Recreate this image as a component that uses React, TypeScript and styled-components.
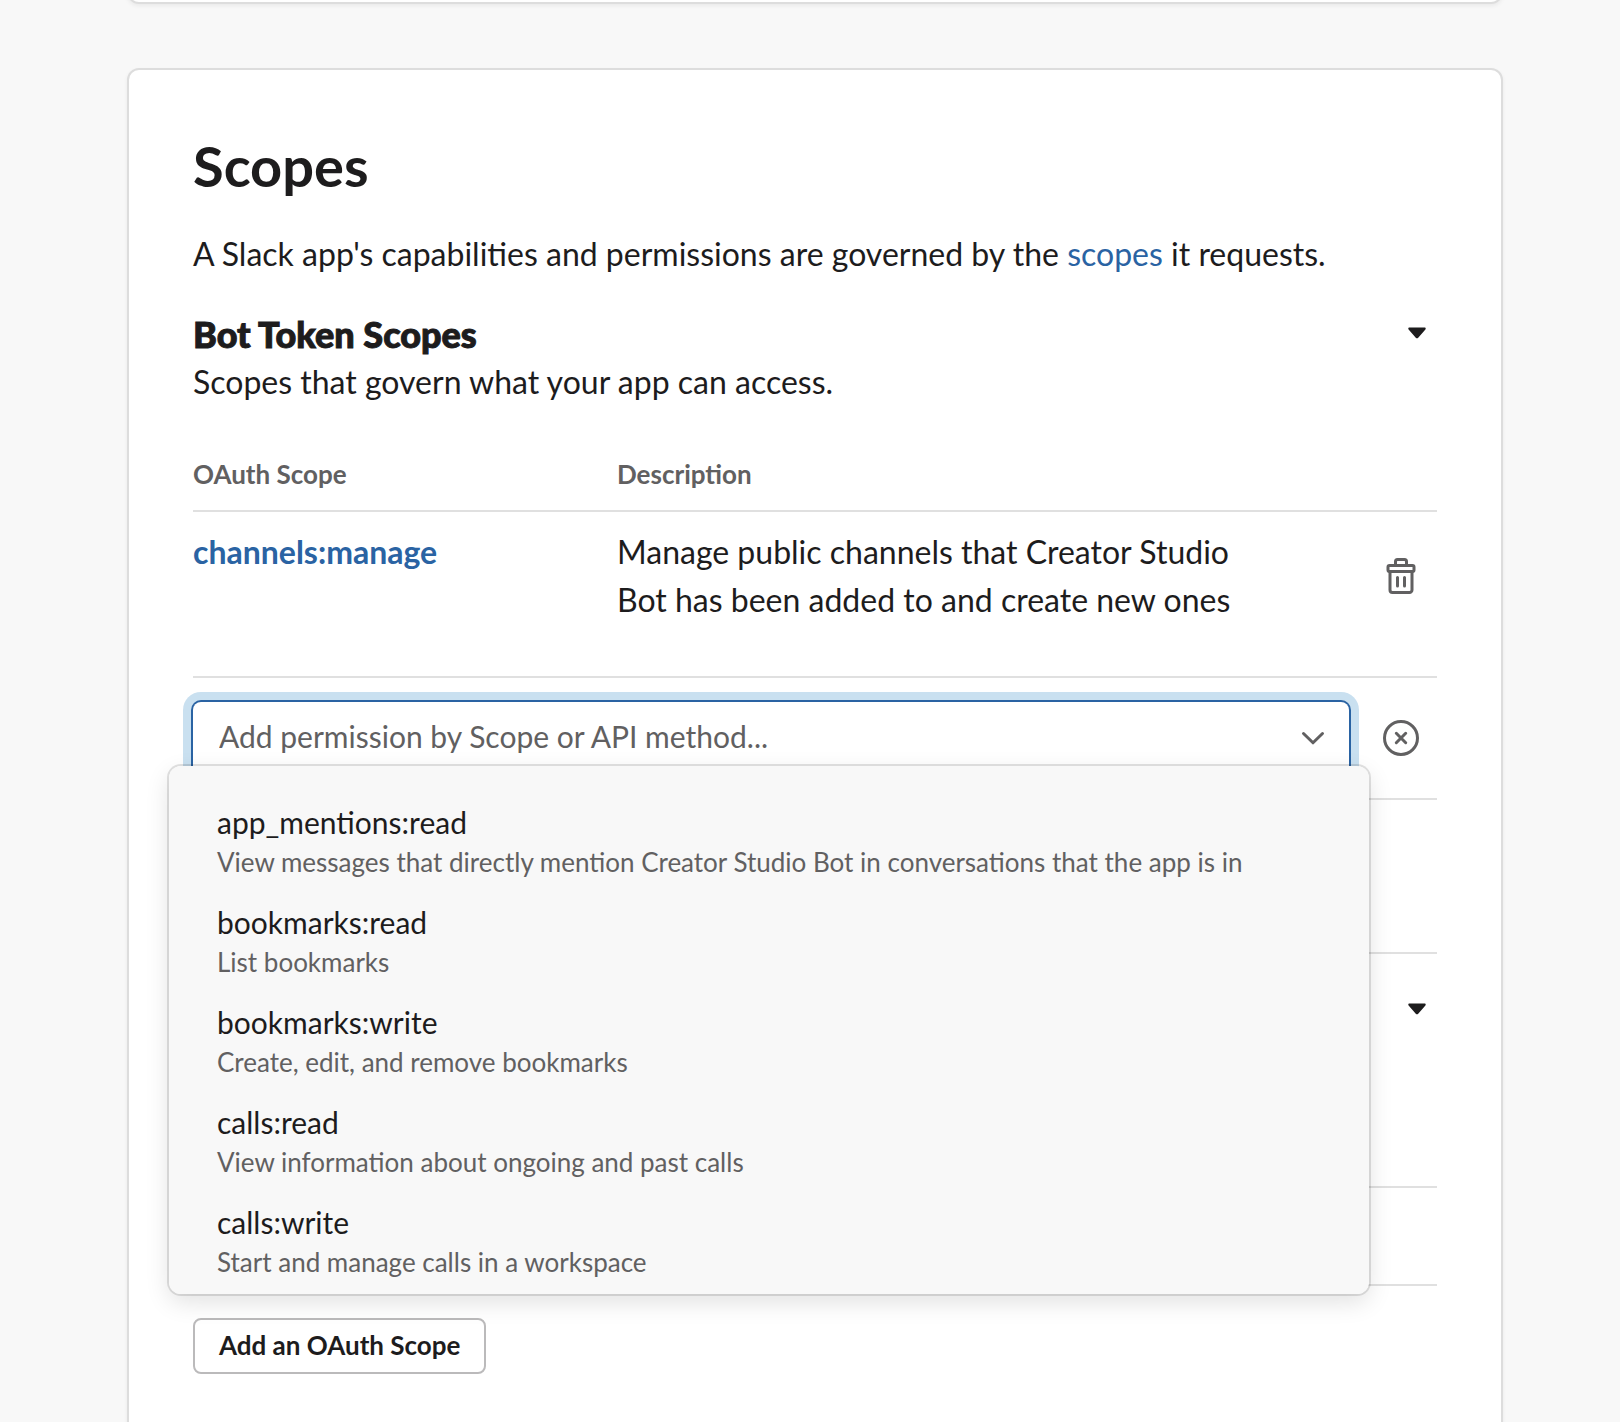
import React from "react";
import styled, { createGlobalStyle } from "styled-components";

const ink = "#1d1c1d";
const muted = "#616061";
const line = "#e0e0e0";
const blue = "#2a63a3";

const GlobalStyle = createGlobalStyle`
  *, *::before, *::after { box-sizing: border-box; }
  body {
    margin: 0;
    background: #f8f8f8;
    color: ${ink};
    font-family: Lato, "Liberation Sans", sans-serif;
    font-size: 32px;
    line-height: 48px;
  }
`;

const Page = styled.main`
  display: flex;
  flex-direction: column;
  gap: 64px;
  height: 100vh;
  padding: 0 117px 0 127px;
  overflow: hidden;
`;

const Card = styled.section`
  flex: none;
  padding: 64px;
  background: #fff;
  border: 2px solid #dddddd;
  border-radius: 12px;
  box-shadow: 0 2px 4px rgba(0, 0, 0, 0.06);
`;

const PreviousCard = styled(Card)`
  margin-top: -128px;
`;

const Title = styled.h1`
  margin: 0 0 32px;
  font-size: 56px;
  font-weight: 700;
  line-height: 64px;
`;

const Text = styled.p`
  margin: 0;
`;

const Link = styled.a<{ $bold?: boolean }>`
  color: ${blue};
  font-weight: ${(p) => (p.$bold ? 700 : 400)};
  text-decoration: none;
`;

const ScopeGroup = styled.section<{ $divided?: boolean }>`
  margin-top: 32px;
  padding-bottom: ${(p) => (p.$divided ? 152 : 0)}px;
  border-bottom: ${(p) => (p.$divided ? `2px solid ${line}` : "none")};
`;

const GroupHeader = styled.header`
  display: flex;
  justify-content: space-between;
  min-height: 96px;
`;

const GroupTitle = styled.h2`
  margin: 0;
  font-size: 36px;
  font-weight: 900;
  line-height: 48px;
  -webkit-text-stroke: 1px ${ink};
`;

const IconButton = styled.button<{ $width?: number; $height?: number }>`
  display: flex;
  flex: none;
  align-items: center;
  justify-content: center;
  width: ${(p) => p.$width ?? 72}px;
  height: ${(p) => p.$height ?? 72}px;
  padding: 0;
  border: 0;
  background: none;
  color: ${muted};
  cursor: pointer;
`;

const CaretButton = styled(IconButton)`
  color: ${ink};
`;

const Table = styled.table`
  width: 100%;
  margin-top: 32px;
  border-collapse: separate;
  border-spacing: 0;
  table-layout: fixed;
`;

const ScopeCol = styled.col`
  width: 424px;
`;

const ActionCol = styled.col`
  width: 72px;
`;

const HeadCell = styled.th`
  height: 74px;
  padding: 16px 0;
  border-bottom: 2px solid ${line};
  color: ${muted};
  font-size: 26px;
  font-weight: 700;
  line-height: 40px;
  text-align: left;
`;

const Cell = styled.td<{ $pad?: number }>`
  padding: ${(p) => p.$pad ?? 16}px 0;
  border-bottom: 2px solid ${line};
  vertical-align: top;
`;

const EmptyCell = styled(Cell)`
  height: 98px;
`;

const Description = styled.p`
  max-width: 640px;
  margin: 0 0 36px;
`;

const Combobox = styled.div`
  position: relative;
  margin-right: 16px;
`;

const Field = styled.label`
  display: flex;
  align-items: center;
  height: 72px;
  padding: 0 24px 0 26px;
  border-radius: 8px;
  background: #fff;
  box-shadow: 0 0 0 2px ${blue}, 0 0 0 10px #c9e0f0;
  color: ${muted};
`;

const FieldInput = styled.input`
  flex: 1;
  min-width: 0;
  height: 68px;
  padding: 0 0 4px;
  border: 0;
  outline: 0;
  background: none;
  color: ${ink};
  font: 400 30px/40px Lato, "Liberation Sans", sans-serif;

  &::placeholder {
    color: ${muted};
    opacity: 1;
  }
`;

const Menu = styled.ul`
  position: absolute;
  z-index: 2;
  top: 64px;
  right: -20px;
  left: -24px;
  max-height: 528px;
  margin: 0;
  padding: 26px 0;
  overflow-y: auto;
  scrollbar-width: none;
  list-style: none;
  background: #f8f8f8;
  border-radius: 12px;
  box-shadow: 0 0 0 2px rgba(29, 28, 29, 0.13), 0 8px 24px rgba(0, 0, 0, 0.12);
`;

const Option = styled.li`
  display: flex;
  flex-direction: column;
  padding: 10px 48px;
  line-height: 40px;
  cursor: pointer;
`;

const OptionName = styled.span`
  font-size: 30px;
`;

const OptionHint = styled.span`
  color: ${muted};
  font-size: 26px;
`;

const OutlineButton = styled.button`
  display: block;
  height: 56px;
  margin-top: 32px;
  padding: 0 24px 2px;
  border: 2px solid #bbbabb;
  border-radius: 8px;
  background: #fff;
  color: ${ink};
  font: 700 26px/40px Lato, "Liberation Sans", sans-serif;
  cursor: pointer;
`;

const options = [
  {
    name: "app_mentions:read",
    hint: "View messages that directly mention Creator Studio Bot in conversations that the app is in",
  },
  { name: "bookmarks:read", hint: "List bookmarks" },
  { name: "bookmarks:write", hint: "Create, edit, and remove bookmarks" },
  { name: "calls:read", hint: "View information about ongoing and past calls" },
  { name: "calls:write", hint: "Start and manage calls in a workspace" },
];

const Caret = () => (
  <svg width="18" height="12" viewBox="0 0 18 12" fill="currentColor" aria-hidden="true">
    <path d="M1.4 0.5h15.2c1 0 1.5 1.1.8 1.9L10 10.9c-.6.6-1.4.6-2 0L.6 2.4C-.1 1.6.4.5 1.4.5z" />
  </svg>
);

const TrashIcon = () => (
  <svg width="30" height="36" viewBox="0 0 30 36" fill="none" stroke="currentColor" strokeWidth="3" strokeLinecap="round" aria-hidden="true">
    <path d="M9.500 7V3.500a2 2 0 0 1 2-2h7a2 2 0 0 1 2 2V7" />
    <rect x="2" y="7.5" width="26" height="6" rx="1.5" />
    <path d="M4 14v18a2.500 2.500 0 0 0 2.500 2.500h17A2.500 2.500 0 0 0 26 32V14" />
    <path d="M11.500 19.500v8.500M18.500 19.500v8.500" />
  </svg>
);

const ClearIcon = () => (
  <svg width="36" height="36" viewBox="0 0 36 36" fill="none" stroke="currentColor" strokeWidth="3" strokeLinecap="round" aria-hidden="true">
    <circle cx="18" cy="18" r="16.5" />
    <path d="M13.300 13.300l9.400 9.400M22.700 13.300l-9.400 9.400" />
  </svg>
);

const ChevronIcon = () => (
  <svg width="24" height="16" viewBox="0 0 24 16" fill="none" stroke="currentColor" strokeWidth="3" strokeLinecap="round" strokeLinejoin="round" aria-hidden="true">
    <path d="M2.500 3.500L12 12.800l9.500-9.300" />
  </svg>
);

export default function App() {
  return (
    <>
      <GlobalStyle />
      <Page>
        <PreviousCard aria-hidden="true" />
        <Card>
          <Title>Scopes</Title>
          <Text>
            A Slack app's capabilities and permissions are governed by the{" "}
            <Link href="#scopes">scopes</Link> it requests.
          </Text>

          <ScopeGroup $divided>
            <GroupHeader>
              <div>
                <GroupTitle>Bot Token Scopes</GroupTitle>
                <Text>Scopes that govern what your app can access.</Text>
              </div>
              <CaretButton type="button" aria-label="Toggle bot token scopes" $width={40} $height={46}>
                <Caret />
              </CaretButton>
            </GroupHeader>
            <Table>
              <colgroup>
                <ScopeCol />
                <col />
                <ActionCol />
              </colgroup>
              <thead>
                <tr>
                  <HeadCell scope="col">OAuth Scope</HeadCell>
                  <HeadCell scope="col">Description</HeadCell>
                  <HeadCell />
                </tr>
              </thead>
              <tbody>
                <tr>
                  <Cell>
                    <Link href="#channels-manage" $bold>channels:manage</Link>
                  </Cell>
                  <Cell>
                    <Description>
                      Manage public channels that Creator Studio Bot has been added to and create new ones
                    </Description>
                  </Cell>
                  <Cell>
                    <IconButton type="button" aria-label="Remove channels:manage" $height={96}>
                      <TrashIcon />
                    </IconButton>
                  </Cell>
                </tr>
                <tr>
                  <Cell colSpan={2} $pad={24}>
                    <Combobox>
                      <Field>
                        <FieldInput
                          type="text"
                          role="combobox"
                          aria-label="Add permission by Scope or API method"
                          aria-expanded="true"
                          aria-controls="scope-options"
                          placeholder="Add permission by Scope or API method..."
                        />
                        <ChevronIcon />
                      </Field>
                      <Menu id="scope-options" role="listbox" aria-label="Scopes">
                        {options.map((o) => (
                          <Option key={o.name} role="option">
                            <OptionName>{o.name}</OptionName>
                            <OptionHint>{o.hint}</OptionHint>
                          </Option>
                        ))}
                      </Menu>
                    </Combobox>
                  </Cell>
                  <Cell $pad={24}>
                    <IconButton type="button" aria-label="Cancel adding a scope">
                      <ClearIcon />
                    </IconButton>
                  </Cell>
                </tr>
              </tbody>
            </Table>
          </ScopeGroup>

          <ScopeGroup aria-label="User Token Scopes">
            <GroupHeader>
              <div />
              <CaretButton type="button" aria-label="Toggle user token scopes" $width={40} $height={46}>
                <Caret />
              </CaretButton>
            </GroupHeader>
            <Table>
              <thead>
                <tr>
                  <HeadCell />
                </tr>
              </thead>
              <tbody>
                <tr>
                  <EmptyCell />
                </tr>
              </tbody>
            </Table>
            <OutlineButton type="button">Add an OAuth Scope</OutlineButton>
          </ScopeGroup>
        </Card>
      </Page>
    </>
  );
}
